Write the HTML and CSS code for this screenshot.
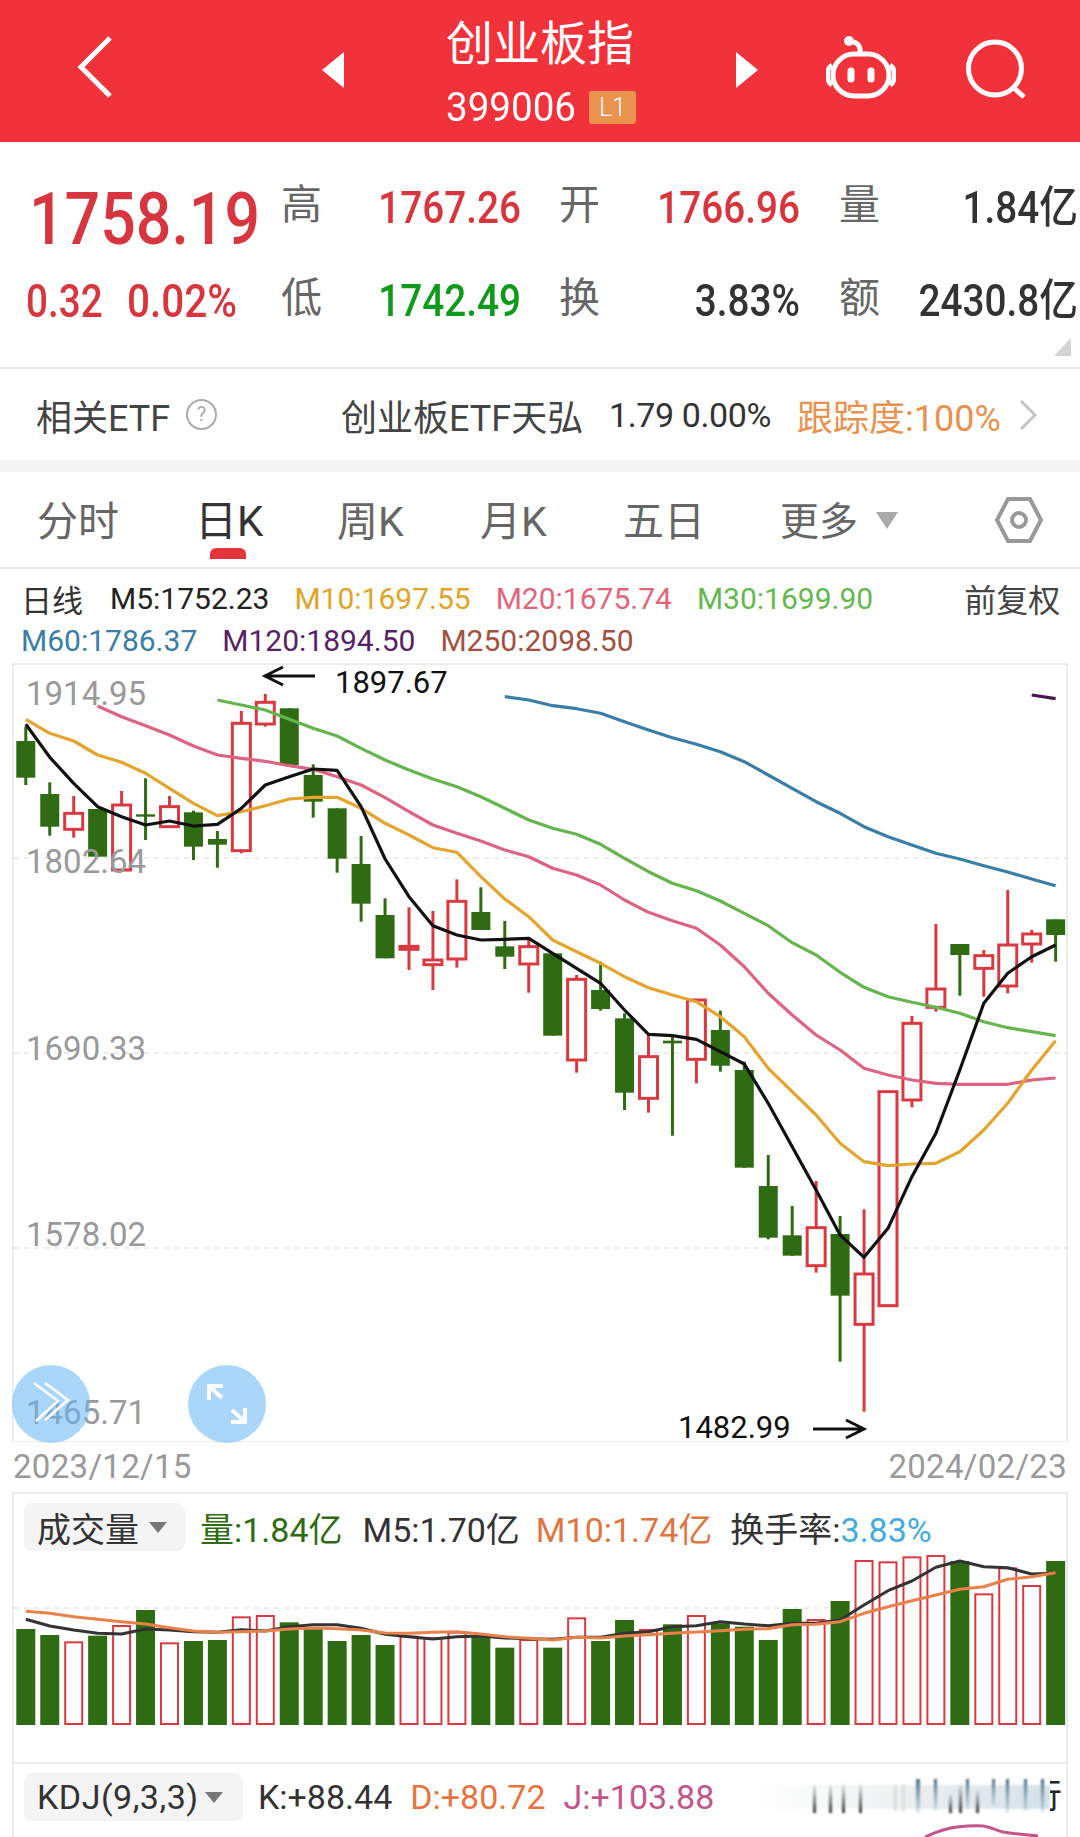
FILE: index.html
```html
<!DOCTYPE html>
<html lang="zh-CN">
<head>
    <meta charset="UTF-8">
    <meta name="viewport" content="width=device-width, initial-scale=1.0">
    <title>创业板指 399006</title>
    <link rel="stylesheet" href="styles.css">
</head>
<body>
    <div class="page">
        <header class="top-bar">
            <svg class="back-icon" viewBox="0 0 36 64"><path d="M33 3 L4 32 L33 61"/></svg>
            <svg class="switch-icon switch-prev" viewBox="0 0 22 36"><path d="M22 0 V36 L0 18 Z"/></svg>
            <div class="title-box">
                <div class="title-name">创业板指</div>
                <div class="title-code"><span class="code-num">399006</span><span class="level-badge">L1</span></div>
            </div>
            <svg class="switch-icon switch-next" viewBox="0 0 22 36"><path d="M0 0 V36 L22 18 Z"/></svg>
            <svg class="robot-icon" viewBox="0 0 70 64">
                <path class="robot-line" d="M34 17 C35 9 31 6 23 5"/>
                <circle class="robot-eye" cx="23" cy="5" r="5"/>
                <rect class="robot-line" x="7" y="18" width="56" height="42" rx="21"/>
                <path class="robot-line" d="M6 29 C0 33 0 45 6 49 M64 29 C70 33 70 45 64 49"/>
                <rect class="robot-eye" x="21.5" y="31.5" width="7" height="15" rx="3.5"/>
                <rect class="robot-eye" x="41.5" y="31.5" width="7" height="15" rx="3.5"/>
            </svg>
            <svg class="search-icon" viewBox="0 0 60 60"><circle cx="29" cy="29.5" r="26.5"/><path d="M48 49 L58 58"/></svg>
        </header>

        <section class="quote">
            <div class="price-big">1758.19</div>
            <div class="quote-label">高</div>
            <div class="quote-value up">1767.26</div>
            <div class="quote-label">开</div>
            <div class="quote-value up">1766.96</div>
            <div class="quote-label">量</div>
            <div class="quote-value">1.84亿</div>
            <div class="price-change"><span>0.32</span><span>0.02%</span></div>
            <div class="quote-label">低</div>
            <div class="quote-value down">1742.49</div>
            <div class="quote-label">换</div>
            <div class="quote-value">3.83%</div>
            <div class="quote-label">额</div>
            <div class="quote-value">2430.8亿</div>
            <div class="corner-mark"></div>
        </section>

        <section class="etf-row">
            <span class="etf-title">相关ETF</span>
            <span class="help-dot">?</span>
            <span class="etf-name">创业板ETF天弘</span>
            <span class="etf-price">1.79 0.00%</span>
            <span class="etf-track">跟踪度:100%</span>
            <svg class="etf-arrow" viewBox="0 0 18 30"><path d="M2 1 L16 15 L2 29"/></svg>
        </section>

        <nav class="tabs">
            <span class="tab">分时</span>
            <span class="tab tab-active">日K</span>
            <span class="tab">周K</span>
            <span class="tab">月K</span>
            <span class="tab">五日</span>
            <span class="tab tab-more">更多<i class="tab-caret"></i></span>
            <svg class="hex-icon" viewBox="0 0 48 46">
                <path d="M13 2 H35 L46 23 L35 44 H13 L2 23 Z"/>
                <circle cx="24" cy="23" r="7"/>
            </svg>
        </nav>

        <section class="ma-legend">
            <div class="ma-row">
                <span class="ma-type">日线</span>
                <span class="m5">M5:1752.23</span>
                <span class="m10">M10:1697.55</span>
                <span class="m20">M20:1675.74</span>
                <span class="m30">M30:1699.90</span>
                <span class="ma-adjust">前复权</span>
            </div>
            <div class="ma-row">
                <span class="m60">M60:1786.37</span>
                <span class="m120">M120:1894.50</span>
                <span class="m250">M250:2098.50</span>
            </div>
        </section>

        <section class="kline">
            <svg id="klineChart" class="chart-svg" width="1056" height="780"></svg>
            <span class="axis-label axis-1">1914.95</span>
            <span class="axis-label axis-2">1802.64</span>
            <span class="axis-label axis-3">1690.33</span>
            <span class="axis-label axis-4">1578.02</span>
            <span class="axis-label axis-5">1465.71</span>
            <span class="peak-label peak-high">1897.67</span>
            <span class="peak-label peak-low">1482.99</span>
            <span class="float-btn float-left">
                <svg viewBox="0 0 78 78"><path d="M22 18 L46 36 L24 56 M33 18 L56 35 L33 55"/></svg>
            </span>
            <span class="float-btn float-right">
                <svg viewBox="0 0 78 78"><path d="M21 21 L34 33 M21 35 V21 H35 M57 57 L44 45 M57 43 V57 H43"/></svg>
            </span>
        </section>

        <div class="date-row"><span>2023/12/15</span><span>2024/02/23</span></div>

        <section class="volume">
            <div class="panel-head">
                <span class="panel-chip">成交量<i class="chip-caret"></i></span>
                <span class="vol-now">量:1.84亿</span>
                <span class="vol-m5">M5:1.70亿</span>
                <span class="vol-m10">M10:1.74亿</span>
                <span class="vol-rate">换手率:<em>3.83%</em></span>
            </div>
            <svg id="volumeChart" class="chart-svg" width="1056" height="240"></svg>
        </section>

        <section class="kdj">
            <div class="panel-head">
                <span class="panel-chip">KDJ(9,3,3)<i class="chip-caret"></i></span>
                <span class="kdj-k">K:+88.44</span>
                <span class="kdj-d">D:+80.72</span>
                <span class="kdj-j">J:+103.88</span>
            </div>
            <svg class="watermark" viewBox="0 0 340 72" width="340" height="72">
                <defs>
                    <linearGradient id="wmBand"><stop offset="0" stop-color="#f2f4f5" stop-opacity="0"/><stop offset="0.5" stop-color="#eef0f1"/><stop offset="1" stop-color="#d5e2ea"/></linearGradient>
                    <linearGradient id="wmLow" x1="0" y1="0" x2="0" y2="1"><stop offset="0" stop-color="#333" stop-opacity="0"/><stop offset="1" stop-color="#333"/></linearGradient>
                    <linearGradient id="wmHigh" x1="0" y1="0" x2="0" y2="1"><stop offset="0" stop-color="#48697c"/><stop offset="1" stop-color="#6d93a8" stop-opacity="0.2"/></linearGradient>
                </defs>
                <rect class="wm-soft" x="3" y="20" width="307" height="24" fill="url(#wmBand)"/>
                <g class="wm-soft">
                    <rect x="73" y="18" width="3" height="30" fill="url(#wmLow)"/>
                    <rect x="89" y="18" width="3" height="30" fill="url(#wmLow)"/>
                    <rect x="102" y="18" width="3" height="30" fill="url(#wmLow)"/>
                    <rect x="119" y="18" width="3" height="30" fill="url(#wmLow)"/>
                    <rect x="154" y="20" width="3" height="26" fill="#ddd"/>
                    <rect x="162" y="20" width="3" height="26" fill="#ddd"/>
                    <rect x="176" y="14" width="4" height="34" fill="url(#wmHigh)"/>
                    <rect x="194" y="14" width="3" height="32" fill="url(#wmHigh)"/>
                    <rect x="209" y="28" width="3" height="20" fill="url(#wmLow)"/>
                    <rect x="219" y="18" width="3" height="30" fill="url(#wmLow)"/>
                    <rect x="226" y="14" width="3" height="30" fill="url(#wmHigh)"/>
                    <rect x="236" y="24" width="3" height="24" fill="url(#wmLow)"/>
                    <rect x="252" y="14" width="3" height="26" fill="url(#wmHigh)"/>
                    <rect x="266" y="14" width="3" height="34" fill="url(#wmHigh)"/>
                    <rect x="284" y="14" width="3" height="32" fill="url(#wmHigh)"/>
                    <rect x="301" y="14" width="3" height="34" fill="url(#wmHigh)"/>
                </g>
            </svg>
            <span class="wm-char"><span>行</span></span>
            <svg class="kdj-curve" viewBox="0 0 130 14"><path d="M1 14 C12 9 22 5 33 4 C42 3 50 2.5 59 3 C66 4 72 7 79 9 C90 11 102 12 114 13"/></svg>
        </section>
    </div>

    <script src="chart.js"></script>
</body>
</html>
```

FILE: styles.css
```css
* {
    margin: 0;
    padding: 0;
    box-sizing: border-box;
}

body {
    font-family: Roboto, 'Noto Sans CJK SC', sans-serif;
    background: white;
}

.page {
    width: 1080px;
    height: 1837px;
    overflow: hidden;
    position: relative;
}

/* top red bar */
.top-bar {
    height: 142px;
    background: #f2323b;
    position: relative;
    color: white;
}

.top-bar svg {
    position: absolute;
}

.back-icon {
    left: 77px;
    top: 35px;
    width: 36px;
    height: 64px;
}

.back-icon path {
    fill: none;
    stroke: white;
    stroke-width: 5;
}

.switch-icon {
    top: 52px;
    width: 22px;
    height: 36px;
    fill: white;
}

.switch-prev { left: 322px; }
.switch-next { left: 736px; }

.title-box {
    width: 1080px;
    padding-left: 446px;
    padding-top: 15px;
}

.title-name {
    font-size: 47px;
    line-height: 58px;
}

.title-code {
    display: flex;
    align-items: center;
    height: 46px;
    margin-top: 11px;
}

.code-num {
    display: block;
    width: 143px;
    font-size: 41px;
    line-height: 46px;
    white-space: nowrap;
    transform: scaleX(0.94);
    transform-origin: left center;
}

.level-badge {
    width: 47px;
    height: 33px;
    background: #e9934f;
    border-radius: 3px;
    font-size: 25px;
    line-height: 33px;
    text-align: center;
    font-weight: 300;
}

.robot-icon {
    left: 826px;
    top: 36px;
    width: 70px;
    height: 64px;
}

.robot-line {
    fill: none;
    stroke: white;
    stroke-width: 5;
}

.robot-eye {
    fill: white;
}

.search-icon {
    left: 966px;
    top: 39px;
    width: 60px;
    height: 60px;
    fill: none;
    stroke: white;
    stroke-width: 5;
}

/* quote block */
.quote {
    height: 227px;
    padding-top: 19px;
    display: grid;
    grid-template-columns: 281px 41px 199px 79px 200px 80px 198px;
    grid-template-rows: 93px 93px;
    align-items: center;
    position: relative;
    border-bottom: 2px solid #e8e8e8;
}

.price-big {
    font-size: 72px;
    font-weight: 500;
    color: #d8363e;
    padding-left: 29px;
    padding-top: 24px;
    white-space: nowrap;
    transform: scaleX(0.87);
    transform-origin: 29px 50%;
}

.price-change {
    display: flex;
    padding-left: 26px;
    font-size: 46px;
    line-height: 50px;
    font-weight: 500;
    color: #d8363e;
}

.price-change span {
    display: block;
    width: 101px;
    white-space: nowrap;
    transform: scaleX(0.84);
    transform-origin: left center;
}

.price-change span:last-child {
    transform: scaleX(0.88);
}

.quote-label {
    font-size: 41px;
    line-height: 50px;
    color: #666;
    text-align: right;
    margin-bottom: 5px;
}

.quote-value {
    font-size: 44px;
    line-height: 50px;
    font-weight: 500;
    color: #333;
    text-align: right;
    white-space: nowrap;
    transform: scaleX(0.88);
    transform-origin: right center;
}

.up { color: #d8363e; }
.down { color: #0f9a1c; }

.corner-mark {
    position: absolute;
    right: 9px;
    top: 196px;
    width: 0;
    height: 0;
    border-left: 17px solid transparent;
    border-bottom: 18px solid #d4d4d4;
}

/* related etf */
.etf-row {
    height: 103px;
    display: flex;
    align-items: center;
    padding-left: 36px;
    border-bottom: 12px solid #f5f5f5;
    white-space: nowrap;
}

.etf-title {
    font-size: 36px;
    color: #444;
    width: 150px;
}

.help-dot {
    width: 31px;
    height: 31px;
    border: 2px solid #aaa;
    border-radius: 50%;
    color: #aaa;
    font-size: 20px;
    line-height: 27px;
    text-align: center;
}

.etf-name {
    font-size: 36px;
    color: #444;
    margin-left: 124px;
    width: 268px;
}

.etf-price {
    font-size: 34px;
    color: #333;
    width: 188px;
    letter-spacing: -0.4px;
}

.etf-track {
    font-size: 36px;
    color: #e9924f;
    width: 222px;
}

.etf-arrow {
    width: 18px;
    height: 30px;
    fill: none;
    stroke: #c4c4c4;
    stroke-width: 3;
}

/* period tabs */
.tabs {
    height: 97px;
    display: flex;
    position: relative;
    align-items: center;
    padding-bottom: 4px;
    border-bottom: 2px solid #e8e8e8;
}

.tab {
    font-size: 41px;
    color: #666;
    position: absolute;
}

.tab:nth-child(1) { left: 37px; }
.tab:nth-child(2) { left: 195px; }
.tab:nth-child(3) { left: 337px; }
.tab:nth-child(4) { left: 480px; }
.tab:nth-child(5) { left: 623px; }
.tab:nth-child(6) { left: 780px; font-size: 39px; }

.tab-active {
    color: #333;
    font-size: 42px;
}

.tab-active::after {
    content: '';
    position: absolute;
    left: 15px;
    bottom: -11px;
    width: 36px;
    height: 11px;
    background: #e3343c;
    border-radius: 6px 6px 0 0;
}

.tab-caret {
    position: absolute;
    left: 96px;
    top: 22px;
    width: 0;
    height: 0;
    border-left: 11px solid transparent;
    border-right: 11px solid transparent;
    border-top: 17px solid #aaa;
}

.hex-icon {
    position: absolute;
    left: 995px;
    top: 25px;
    width: 48px;
    height: 46px;
    fill: none;
    stroke: #999;
    stroke-width: 4;
}

/* moving average legend */
.ma-legend {
    height: 93px;
    padding: 8px 0 0 21px;
    font-size: 30px;
}

.ma-row {
    display: flex;
    height: 42px;
    align-items: center;
    gap: 25px;
    white-space: nowrap;
}

.ma-type {
    font-size: 31px;
    color: #333;
    margin-right: 2px;
}

.m5 { color: #222; }
.m10 { color: #e0a428; }
.m20 { color: #e0667c; }
.m30 { color: #64b84e; }
.m60 { color: #3a7da6; }
.m120 { color: #571f66; }
.m250 { color: #a34f3f; }

.ma-adjust {
    margin-left: 66px;
    font-size: 32px;
    color: #444;
}

/* kline chart */
.kline {
    position: relative;
    height: 780px;
    margin-left: 12px;
    width: 1056px;
}

.chart-svg {
    display: block;
}

.axis-label {
    position: absolute;
    left: 14px;
    font-size: 33px;
    line-height: 38px;
    color: #999;
}

.axis-1 { top: 13px; }
.axis-2 { top: 181px; }
.axis-3 { top: 368px; }
.axis-4 { top: 554px; }
.axis-5 { top: 732px; }

.peak-label {
    position: absolute;
    font-size: 31px;
    line-height: 36px;
    color: #111;
}

.peak-high { left: 323px; top: 3px; }
.peak-low { left: 666px; top: 748px; }

.float-btn {
    position: absolute;
    top: 703px;
    width: 78px;
    height: 78px;
    border-radius: 50%;
    background: rgba(100, 180, 245, 0.55);
}

.float-btn svg {
    display: block;
    fill: none;
    stroke: white;
    stroke-width: 2.5;
}

.float-left { left: 0; }
.float-right { left: 176px; }
.float-right svg { stroke-width: 4; }

.date-row {
    display: flex;
    justify-content: space-between;
    width: 1080px;
    padding: 0 13px;
    height: 50px;
    font-size: 33px;
    line-height: 50px;
    color: #999;
    letter-spacing: 0.3px;
}

/* volume and kdj panels */
.volume, .kdj {
    position: relative;
    width: 1056px;
    margin-left: 12px;
    border-top: 2px solid #ececec;
    border-left: 2px solid #ececec;
    border-right: 2px solid #ececec;
}

.volume {
    height: 270px;
}

.kdj {
    height: 75px;
}

.volume .chart-svg {
    position: absolute;
    left: -2px;
    top: -2px;
    z-index: 0;
}

.panel-head {
    position: relative;
    z-index: 1;
    display: flex;
    align-items: center;
    height: 48px;
    margin-top: 9px;
    margin-left: 10px;
    font-size: 34px;
    white-space: nowrap;
}

.panel-chip {
    display: flex;
    align-items: center;
    height: 48px;
    background: #f4f4f4;
    border-radius: 8px;
    padding-left: 13px;
    color: #333;
}

.chip-caret {
    margin: 0 14px 0 10px;
    width: 0;
    height: 0;
    border-left: 9px solid transparent;
    border-right: 9px solid transparent;
    border-top: 11px solid #777;
}

.volume .panel-chip { width: 161px; }
.kdj .panel-chip { width: 219px; letter-spacing: 0.5px; }
.kdj .chip-caret { margin-left: 6px; }

.vol-now { color: #2f6b12; margin-left: 15px; }
.vol-m5 { color: #333; margin-left: 20px; }
.vol-m10 { color: #e0753f; margin-left: 16px; }
.vol-rate { color: #333; margin-left: 18px; }
.vol-rate em { color: #45abde; font-style: normal; }

.kdj-k { color: #333; margin-left: 15px; }
.kdj-d { color: #e8733f; margin-left: 18px; }
.kdj-j { color: #c4558a; margin-left: 18px; }

/* blurred strip at the bottom right */
.watermark {
    position: absolute;
    left: 726px;
    top: 1px;
}

.wm-soft {
    filter: blur(1.2px);
}

.wm-char {
    position: absolute;
    left: 1036px;
    top: 14px;
    width: 12px;
    height: 36px;
    overflow: hidden;
    font-size: 34px;
    line-height: 36px;
    color: #222;
}

.wm-char span {
    display: block;
    margin-left: -22px;
}

.kdj-curve {
    position: absolute;
    left: 910px;
    bottom: 0;
    width: 130px;
    height: 14px;
    fill: none;
    stroke: #c4558a;
    stroke-width: 3;
}
```

FILE: chart.js
```js
// Chart data read off as [open-close body top, body bottom, wick top, wick bottom], y in page px
var SVG_NS = 'http://www.w3.org/2000/svg';
var RED = '#d93a42';
var GREEN = '#2f6b12';
var FIRST_X = 25.8;
var STEP = 23.95;

// up = hollow red, down = solid green, values are raw readings: y = 660 + v / 3
var candles = [
    ['g', 243, 353, 200, 375], ['g', 402, 500, 367, 527], ['r', 460, 508, 408, 533], ['g', 447, 590, 447, 590],
    ['r', 435, 630, 393, 632], ['g', 463, 470, 355, 540], ['r', 440, 500, 408, 500], ['g', 457, 560, 452, 600],
    ['g', 537, 554, 513, 623], ['r', 190, 572, 153, 580], ['r', 127, 192, 102, 200], ['g', 145, 315, 145, 315],
    ['g', 345, 425, 313, 473], ['g', 445, 596, 445, 638], ['g', 612, 731, 528, 785], ['g', 765, 895, 715, 895],
    ['r', 859, 868, 742, 930], ['r', 900, 914, 753, 990], ['r', 724, 897, 658, 923], ['g', 756, 810, 682, 810],
    ['g', 859, 890, 783, 927], ['r', 860, 912, 840, 998], ['g', 880, 1127, 880, 1127], ['r', 958, 1200, 945, 1238],
    ['g', 990, 1047, 905, 1052], ['g', 1075, 1298, 1060, 1350], ['r', 1190, 1315, 1125, 1358], ['g', 1142, 1150, 1125, 1427],
    ['r', 1020, 1198, 1020, 1270], ['g', 1110, 1217, 1052, 1235], ['g', 1230, 1523, 1205, 1523], ['g', 1578, 1733, 1485, 1738],
    ['g', 1726, 1787, 1638, 1787], ['r', 1703, 1817, 1563, 1838], ['g', 1722, 1907, 1668, 2105], ['r', 1842, 1993, 1648, 2255],
    ['r', 1295, 1937, 1292, 1937], ['r', 1090, 1320, 1068, 1342], ['r', 987, 1042, 792, 1055], ['g', 852, 885, 852, 1007],
    ['r', 887, 925, 870, 1010], ['r', 855, 978, 690, 1000], ['r', 822, 852, 810, 908], ['g', 778, 825, 778, 905]
];

var lines = [
    { color: '#3a7da6', start: 20, pts: [110, 120, 137, 146, 160, 185, 210, 233, 253, 275, 305, 345, 385, 425, 460, 500, 530, 555, 580, 597, 617, 636, 657, 677] },
    { color: '#66b44e', start: 8, pts: [120, 135, 150, 178, 205, 228, 265, 300, 330, 357, 380, 410, 445, 480, 505, 523, 553, 595, 635, 670, 692, 723, 760, 797, 848, 885, 937, 982, 1010, 1027, 1042, 1060, 1085, 1103, 1115, 1127] },
    { color: '#dc6482', start: 3, pts: [138, 170, 197, 225, 258, 285, 295, 304, 317, 328, 350, 375, 413, 455, 495, 520, 543, 570, 590, 625, 645, 675, 720, 757, 782, 805, 855, 920, 1000, 1065, 1125, 1170, 1225, 1245, 1260, 1270, 1273, 1273, 1273, 1260, 1254] },
    { color: '#e3a52e', start: 0, pts: [178, 220, 243, 285, 307, 340, 385, 430, 467, 455, 437, 417, 412, 412, 445, 490, 525, 563, 577, 650, 717, 770, 840, 875, 910, 950, 983, 1005, 1025, 1070, 1130, 1225, 1295, 1365, 1450, 1505, 1517, 1512, 1510, 1475, 1410, 1330, 1230, 1142] },
    { color: '#111', start: 0, pts: [193, 292, 370, 440, 470, 495, 483, 498, 493, 445, 375, 350, 327, 331, 440, 597, 710, 797, 825, 840, 838, 835, 880, 925, 970, 1050, 1123, 1127, 1138, 1175, 1212, 1330, 1460, 1590, 1725, 1792, 1705, 1550, 1420, 1230, 1030, 940, 890, 855] },
    { color: '#46184f', start: 42, pts: [105, 116] }
];

// volume bars: top reading, y = 1480 + v / 3
var bars = [
    ['g', 447], ['g', 465], ['r', 487], ['g', 467], ['r', 438], ['g', 390], ['r', 490], ['g', 483], ['g', 480], ['r', 412], ['r', 408],
    ['g', 427], ['g', 445], ['g', 483], ['g', 465], ['g', 495], ['r', 470], ['r', 475], ['r', 458], ['g', 470], ['g', 503], ['r', 480],
    ['g', 503], ['r', 415], ['g', 483], ['g', 420], ['r', 450], ['g', 433], ['r', 408], ['g', 430], ['g', 440], ['g', 480], ['g', 387],
    ['r', 420], ['g', 363], ['r', 243], ['r', 247], ['r', 232], ['r', 228], ['g', 243], ['r', 343], ['r', 265], ['r', 318], ['g', 243]
];

var volBlack = [418, 438, 450, 460, 462, 447, 450, 455, 457, 449, 453, 440, 434, 434, 445, 463, 470, 477, 470, 468, 474, 476, 478, 472, 472, 460, 455, 440, 437, 425, 432, 437, 430, 430, 420, 375, 332, 303, 262, 243, 260, 263, 282, 280];
var volOrange = [394, 400, 410, 418, 425, 432, 443, 453, 457, 455, 453, 447, 444, 446, 450, 459, 460, 457, 455, 462, 470, 475, 480, 472, 474, 468, 464, 460, 456, 452, 448, 446, 434, 433, 425, 400, 380, 362, 345, 328, 320, 298, 290, 278];

function el(parent, name, attrs) {
    var node = document.createElementNS(SVG_NS, name);
    for (var key in attrs) {
        node.setAttribute(key, attrs[key]);
    }
    parent.appendChild(node);
    return node;
}

function centerX(i) {
    return FIRST_X + i * STEP - 12;
}

function drawLine(svg, color, width, points) {
    el(svg, 'polyline', { points: points.join(' '), fill: 'none', stroke: color, 'stroke-width': width, 'stroke-linejoin': 'round' });
}

function drawKline() {
    var svg = document.getElementById('klineChart');
    var top = 662;
    var y = function (v) { return 660 + v / 3 - top; };

    // frame and dashed grid
    el(svg, 'rect', { x: 1, y: 2, width: 1054, height: 778, fill: 'none', stroke: '#ececec', 'stroke-width': 2 });
    [858, 1053, 1248].forEach(function (gy) {
        el(svg, 'line', { x1: 2, x2: 1054, y1: gy - top, y2: gy - top, stroke: '#e6e6e6', 'stroke-width': 1.5, 'stroke-dasharray': '5 5' });
    });

    candles.forEach(function (c, i) {
        var x = centerX(i);
        var color = c[0] === 'r' ? RED : GREEN;
        var h = y(c[2]) - y(c[1]);
        el(svg, 'line', { x1: x, x2: x, y1: y(c[3]), y2: y(c[4]), stroke: color, 'stroke-width': 3 });
        if (c[0] === 'g') {
            el(svg, 'rect', { x: x - 9.5, y: y(c[1]), width: 19, height: h, fill: color });
        } else {
            el(svg, 'rect', { x: x - 9, y: y(c[1]), width: 18, height: h, fill: 'white', stroke: color, 'stroke-width': 3 });
        }
    });

    lines.forEach(function (line) {
        var pts = line.pts.map(function (v, k) {
            return centerX(line.start + k).toFixed(1) + ',' + y(v).toFixed(1);
        });
        drawLine(svg, line.color, 3.2, pts);
    });

    // high and low arrows
    var ay = 676 - top;
    el(svg, 'path', { d: 'M303 ' + ay + ' H253 M271 ' + (ay - 9) + ' L253 ' + ay + ' L271 ' + (ay + 9), fill: 'none', stroke: '#111', 'stroke-width': 3 });
    var by = 1429 - top;
    el(svg, 'path', { d: 'M801 ' + by + ' H852 M834 ' + (by - 9) + ' L852 ' + by + ' L834 ' + (by + 9), fill: 'none', stroke: '#111', 'stroke-width': 3 });
}

function drawVolume() {
    var svg = document.getElementById('volumeChart');
    var top = 1492;
    var y = function (v) { return 1480 + v / 3 - top; };
    var base = 1725 - top;

    el(svg, 'line', { x1: 2, x2: 1054, y1: 1608 - top, y2: 1608 - top, stroke: '#e6e6e6', 'stroke-width': 1.5, 'stroke-dasharray': '5 5' });

    bars.forEach(function (b, i) {
        var x = centerX(i);
        if (b[0] === 'g') {
            el(svg, 'rect', { x: x - 9.5, y: y(b[1]), width: 19, height: base - y(b[1]), fill: GREEN });
        } else {
            el(svg, 'rect', { x: x - 8.5, y: y(b[1]), width: 17, height: base - y(b[1]) - 1, fill: 'white', stroke: RED, 'stroke-width': 2 });
        }
    });

    drawLine(svg, '#333', 3, volBlack.map(function (v, i) { return centerX(i).toFixed(1) + ',' + y(v).toFixed(1); }));
    drawLine(svg, '#e8824a', 3, volOrange.map(function (v, i) { return centerX(i).toFixed(1) + ',' + y(v).toFixed(1); }));
}

drawKline();
drawVolume();
```
